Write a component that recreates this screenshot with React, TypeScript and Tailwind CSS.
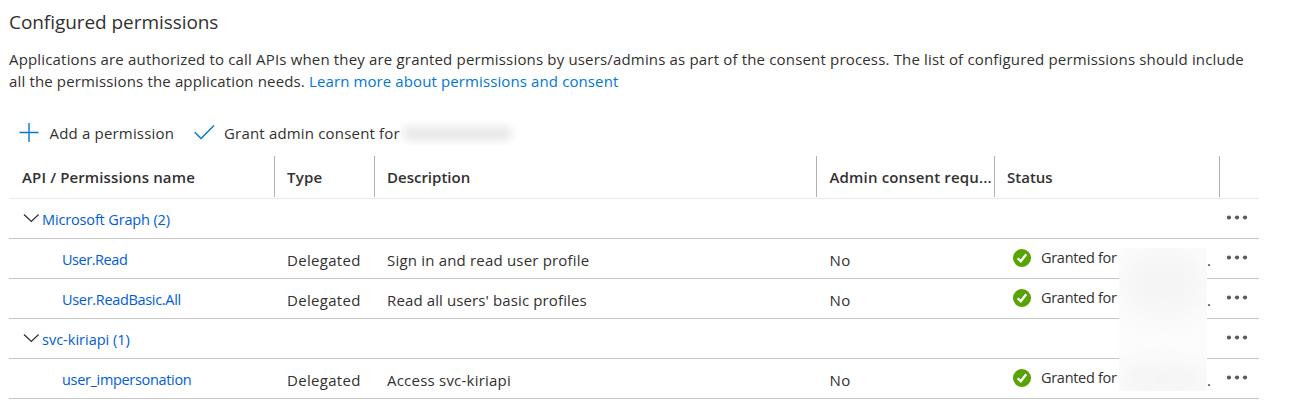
import type { ReactNode } from "react";

const COLS = "grid grid-cols-[266px_100px_442px_178px_225px_39px]";

function Chevron() {
  return (
    <svg className="block h-[10px] w-[16px]" viewBox="0 0 16 10" fill="none">
      <path d="M1 1.5 8.3 8.4 15.6 1.5" stroke="#323130" strokeWidth="1.3" />
    </svg>
  );
}

function More() {
  return (
    <button className="flex h-[37px] items-center pl-[7px]" aria-label="More">
      <svg className="block h-[5px] w-[21px]" viewBox="0 0 21 5" fill="#5c5b5a">
        <circle cx="2" cy="2.5" r="2.1" />
        <circle cx="10" cy="2.5" r="2.1" />
        <circle cx="18" cy="2.5" r="2.1" />
      </svg>
    </button>
  );
}

function GrantedIcon() {
  return (
    <svg className="block h-[18px] w-[18px]" viewBox="0 0 18 18" fill="none">
      <circle cx="9" cy="9" r="9" fill="#57a300" />
      <path d="M4.7 9.3 7.8 12.3 13.2 5.2" stroke="#fff" strokeWidth="2.3" />
    </svg>
  );
}

function HeadCell({ children }: { children?: ReactNode }) {
  return (
    <div className="h-[41px] overflow-hidden whitespace-nowrap border-r border-[#b3b0ad] pl-[12px] leading-[43px]">
      {children}
    </div>
  );
}

function GroupRow({ name, tracking }: { name: string; tracking: string }) {
  return (
    <div className="flex h-[40px] justify-between border-b border-[#c8c8c8]">
      <div className="flex pl-[14px]">
        <div className="pt-[14px]">
          <Chevron />
        </div>
        <a className={`pl-[3px] text-[14.5px] leading-[41px] text-[#015cda] ${tracking}`}>{name}</a>
      </div>
      <div className="w-[39px]">
        <More />
      </div>
    </div>
  );
}

type Permission = { name: string; tracking: string; description: string; descTracking: string };

function PermissionRow({ name, tracking, description, descTracking }: Permission) {
  return (
    <div className={`${COLS} h-[40px] border-b border-[#c8c8c8] text-[15px] leading-[43px]`}>
      <a className={`pl-[53px] text-[14.5px] leading-[41px] text-[#015cda] ${tracking}`}>{name}</a>
      <div className="pl-[12px] tracking-[0.3px]">Delegated</div>
      <div className={`pl-[12px] ${descTracking}`}>{description}</div>
      <div className="pl-[12.5px] tracking-[0.4px]">No</div>
      <div className="flex pl-[18px]">
        <div className="pt-[10px]">
          <GrantedIcon />
        </div>
        <div className="w-[88px] whitespace-nowrap pl-[10px] text-[14.5px] leading-[37px] tracking-[-0.3px]">
          Granted for
        </div>
        <div className="pl-[88px] leading-[43px]">.</div>
      </div>
      <More />
    </div>
  );
}

export default function App() {
  return (
    <main className="h-[412px] w-[1291px] overflow-hidden bg-white pl-[9px] font-['Open_Sans','Noto_Sans',sans-serif] text-[15px] text-[#323130]">
      <h1 className="pt-[8px] text-[19px] leading-[28px] tracking-[-0.06px]">Configured permissions</h1>
      <p className="whitespace-nowrap pt-[12px] leading-[22px] tracking-[0.17px]">
        Applications are authorized to call APIs when they are granted permissions by users/admins as part of the
        consent process. The list of configured permissions should include
        <br />
        <span className="tracking-[0.15px]">all the permissions the application needs. </span>
        <a className="tracking-[0.11px] text-[#0078d4]">Learn more about permissions and consent</a>
      </p>

      <div className="flex h-[58px] pt-[21px] leading-[40px] tracking-[0.18px]">
        <svg className="ml-[10px] mt-[9px] block h-[20px] w-[20px]" viewBox="0 0 20 20" fill="none">
          <path d="M10 1v19M0.5 10.5h19" stroke="#0078d4" strokeWidth="1.4" />
        </svg>
        <span className="w-[155px] whitespace-nowrap pl-[10.5px]">Add a permission</span>
        <svg className="mt-[9px] block h-[20px] w-[21px]" viewBox="0 0 21 20" fill="none">
          <path d="M0.8 10.2 7 16.5 20 3.5" stroke="#0078d4" strokeWidth="1.5" />
        </svg>
        <span className="w-[185px] whitespace-nowrap pl-[9px]">Grant admin consent for</span>
        <div className="mt-[6px] h-[26px] w-[120px] overflow-hidden pl-[4px] pt-[8px]">
          <div className="h-[13px] w-[107px] bg-[#e6e6e6] blur-[5px]" />
        </div>
      </div>

      <section className="relative w-[1250px]">
        <div className={`${COLS} h-[49px] border-b border-[#eaeaea] pt-[6px] font-semibold`}>
          <HeadCell>
            <span className="pl-px tracking-[0.13px]">API / Permissions name</span>
          </HeadCell>
          <HeadCell>
            <span className="tracking-[0.2px]">Type</span>
          </HeadCell>
          <HeadCell>Description</HeadCell>
          <HeadCell>
            <span className="pl-[0.5px] tracking-[0.16px]">Admin consent requ...</span>
          </HeadCell>
          <HeadCell>Status</HeadCell>
          <div />
        </div>
        <GroupRow name="Microsoft Graph (2)" tracking="tracking-[-0.15px]" />
        <PermissionRow
          name="User.Read"
          tracking="tracking-[-0.45px]"
          description="Sign in and read user profile"
          descTracking="tracking-[0.19px]"
        />
        <PermissionRow
          name="User.ReadBasic.All"
          tracking="tracking-[-0.32px]"
          description="Read all users' basic profiles"
          descTracking="tracking-[0.12px]"
        />
        <GroupRow name="svc-kiriapi (1)" tracking="tracking-normal" />
        <PermissionRow
          name="user_impersonation"
          tracking="tracking-[-0.33px]"
          description="Access svc-kiriapi"
          descTracking="tracking-[0.22px]"
        />

        {/* redaction over the tenant names */}
        <div className="absolute left-[1110px] top-[98px] h-[143px] w-[88px] overflow-hidden bg-[#fcfcfc]">
          <div className="mx-auto mt-[2px] h-[68px] w-[84px] rounded-full bg-[#f5f5f5] blur-[12px]" />
          <div className="mx-auto mt-[46px] h-[30px] w-[84px] rounded-full bg-[#f4f4f4] blur-[10px]" />
        </div>
      </section>
    </main>
  );
}
